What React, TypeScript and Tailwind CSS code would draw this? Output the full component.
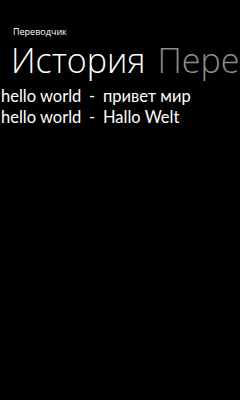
import React from "react";

const rows = [
  { from: "hello world", to: "привет мир" },
  { from: "hello world", to: "Hallo Welt" },
];

export default function App() {
  return (
    <div
      className="w-[240px] h-[400px] bg-black text-white overflow-hidden"
      style={{ fontFamily: '"Open Sans", "Noto Sans", sans-serif' }}
    >
      <div className="pl-[13px] pt-[26px] text-[9px] leading-[12px]">Переводчик</div>
      <div className="flex gap-[12px] pl-[11px] mt-[4px] text-[34px] leading-[36px] font-light whitespace-nowrap">
        <span>История</span>
        <span className="text-[#8c8c8c]">Переводчик</span>
      </div>
      <div
        className="mt-[8px] pl-[1px] flex flex-col text-[16.5px] leading-[21px]"
        style={{ fontFamily: 'Lato, "Open Sans", sans-serif' }}
      >
        {rows.map((r, i) => (
          <div key={i} className="flex items-baseline whitespace-nowrap">
            <span className="w-[88px]">{r.from}</span>
            <span className="w-[14px]">-</span>
            <span>{r.to}</span>
          </div>
        ))}
      </div>
    </div>
  );
}
